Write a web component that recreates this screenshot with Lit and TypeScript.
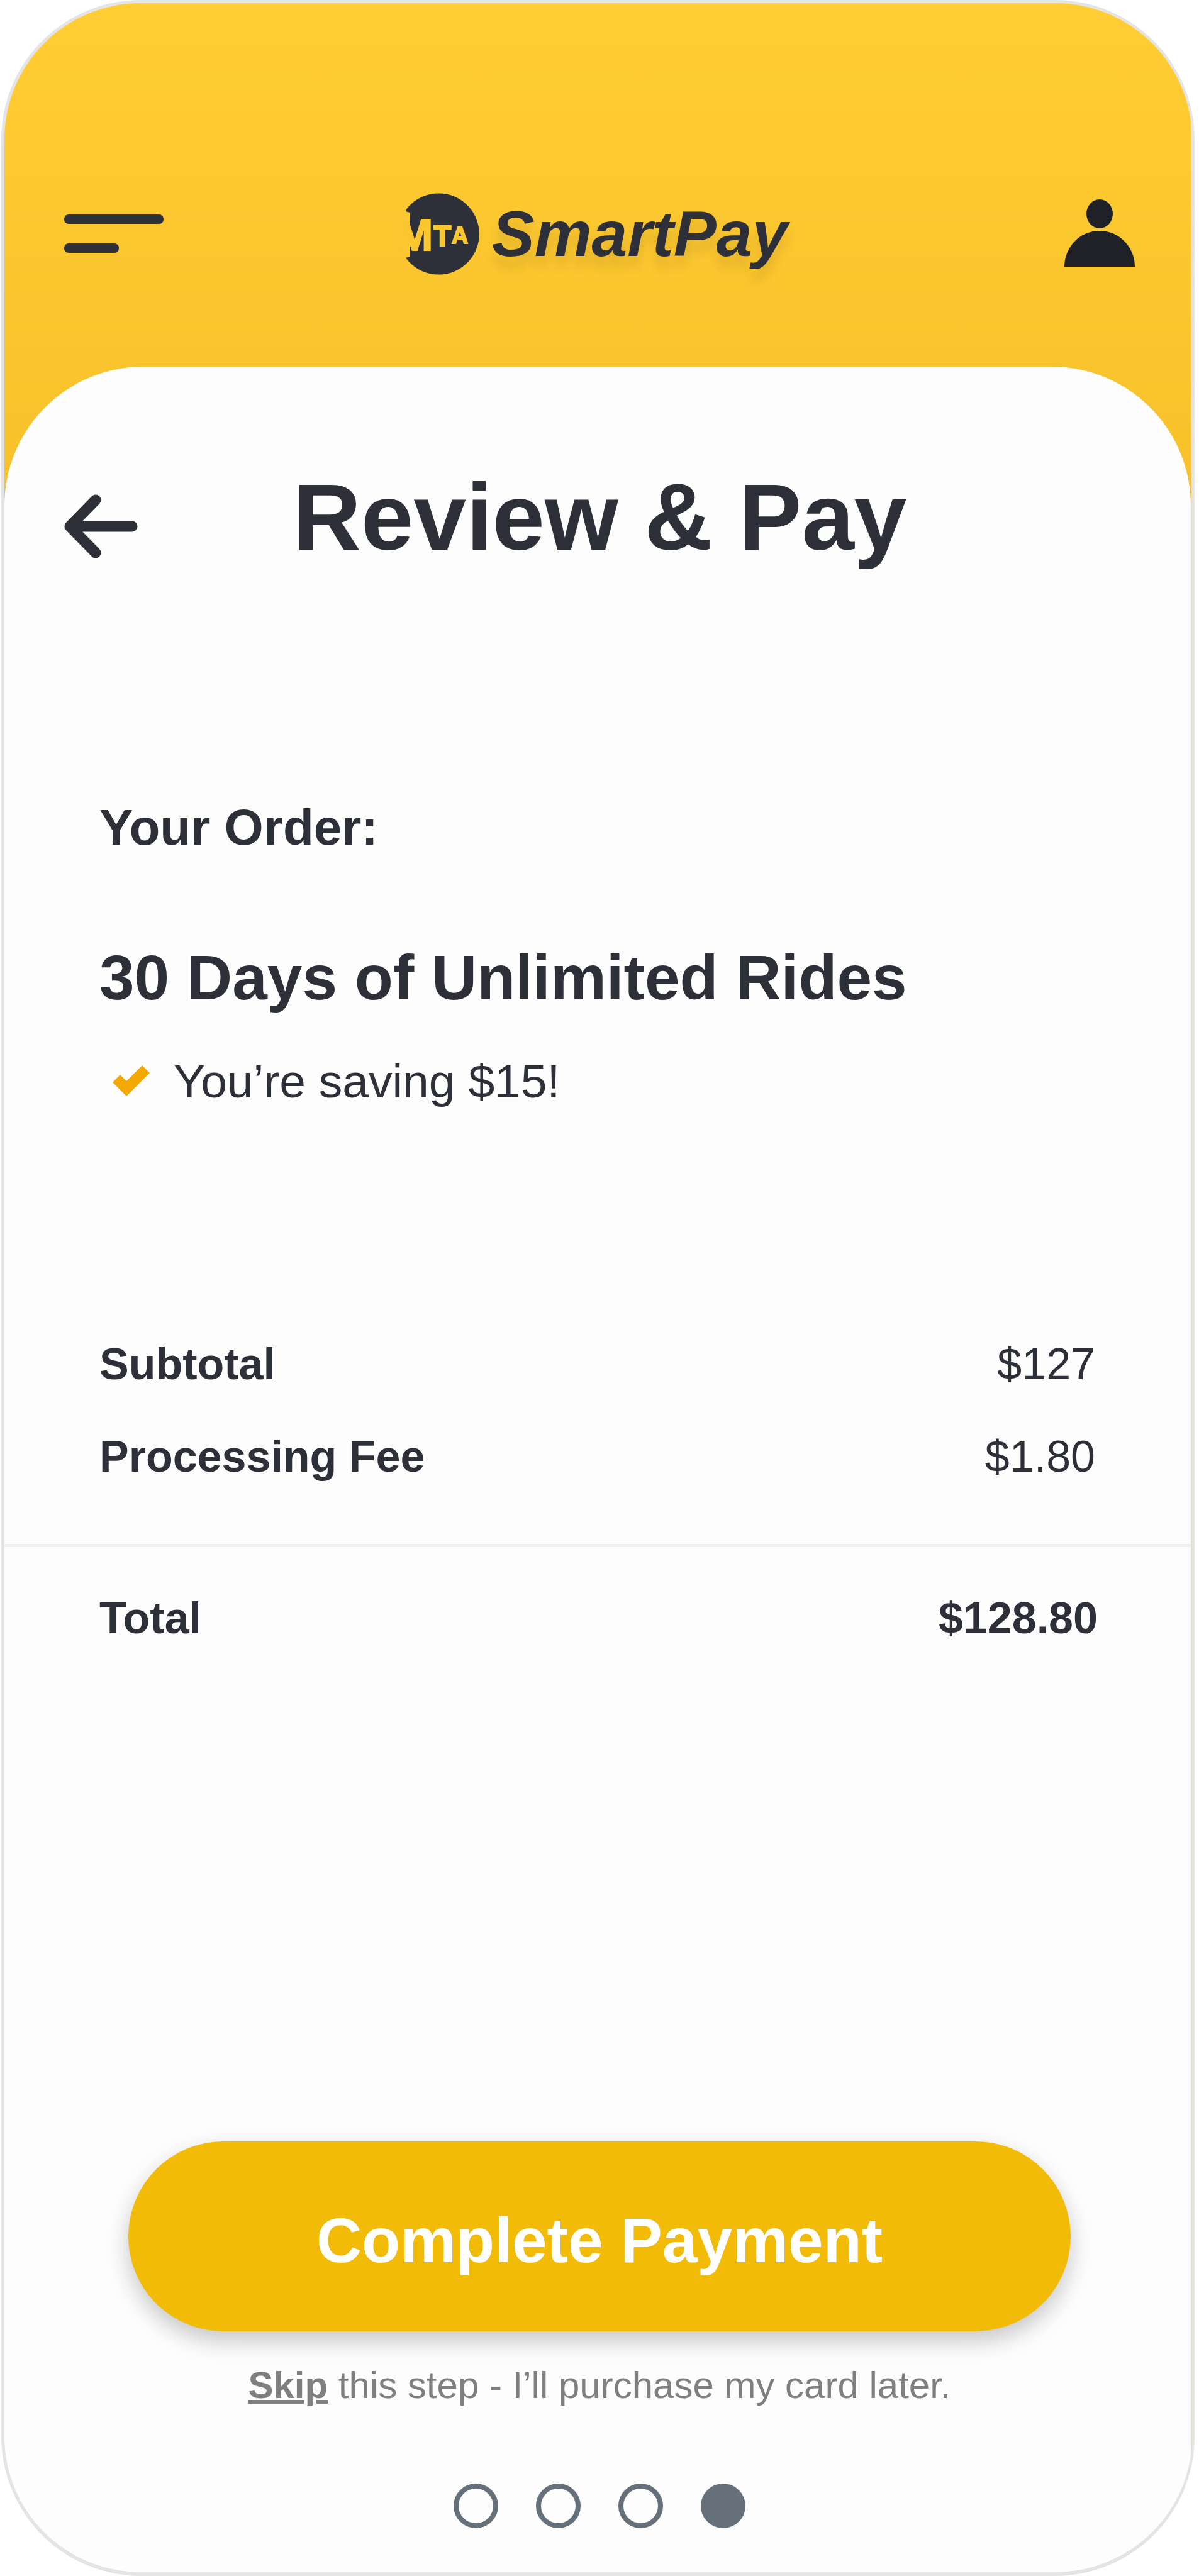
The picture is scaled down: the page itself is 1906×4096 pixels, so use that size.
import { LitElement, html, css } from "lit";
import { customElement, property, state } from "lit/decorators.js";
import { classMap } from "lit/directives/class-map.js";

interface Line {
  label: string;
  amount: string;
}

@customElement("app-header")
export class AppHeader extends LitElement {
  static styles = css`
    :host {
      display: grid;
      grid-template-columns: 1fr auto 1fr;
      align-items: center;
      padding: 302px 88px 146px 95px;
      color: #2e3039;
    }
    button {
      display: block;
      border: 0;
      padding: 0;
      background: none;
      color: inherit;
      cursor: pointer;
    }
    svg {
      display: block;
    }
    .profile {
      justify-self: end;
      color: #202126;
    }
    .brand {
      display: flex;
      align-items: center;
      gap: 20px;
      padding-right: 10px;
      color: inherit;
      text-decoration: none;
    }
    .mark {
      font-weight: 700;
      overflow: visible;
    }
    .letters {
      fill: #fbc730;
      stroke: #fbc730;
      stroke-width: 2px;
    }
    .letter-m { font-size: 70px; }
    .letter-t { font-size: 46px; }
    .letter-a { font-size: 36px; }
    .name {
      font-size: 102px;
      line-height: 120px;
      font-weight: 700;
      font-style: italic;
      text-shadow: 0 18px 18px rgba(0, 0, 0, 0.1);
    }
  `;

  render() {
    return html`
      <button class="menu" aria-label="Menu">
        <svg width="158" height="62" viewBox="0 0 158 62" fill="currentColor">
          <rect width="158" height="15" rx="7" />
          <rect y="46" width="87" height="15" rx="7" />
        </svg>
      </button>
      <a class="brand" href="#">
        <svg class="mark" width="117" height="130" viewBox="0 0 117 130">
          <path fill="currentColor" d="M0 27A64.6 64.6 0 1 1 0 103L6 101V31L0 29Z" />
          <g class="letters">
            <text class="letter-m" x="-15" y="91">M</text>
            <text class="letter-t" x="44" y="84">T</text>
            <text class="letter-a" x="73" y="80">A</text>
          </g>
        </svg>
        <span class="name">SmartPay</span>
      </a>
      <button class="profile" aria-label="Account">
        <svg width="114" height="110" viewBox="0 0 114 110" fill="currentColor">
          <ellipse cx="57" cy="23" rx="21" ry="23" />
          <path d="M1 107A56 57 0 0 1 113 107Z" />
        </svg>
      </button>
    `;
  }
}

@customElement("order-table")
export class OrderTable extends LitElement {
  @property({ attribute: false }) lines: Line[] = [];
  @property() total = "";

  static styles = css`
    :host {
      display: block;
    }
    table {
      width: 100%;
      border-collapse: collapse;
      font-size: 70px;
      line-height: 84px;
    }
    th {
      padding: 31px 0 32px 151px;
      text-align: left;
      font-weight: 700;
    }
    td {
      padding: 31px 152px 32px 0;
      text-align: right;
    }
    tbody tr:last-child > * {
      padding-bottom: 97px;
    }
    tfoot {
      border-top: 5px solid #f0f0f0;
    }
    tfoot th,
    tfoot td {
      padding-top: 71px;
      font-weight: 700;
    }
    tfoot td {
      padding-right: 148px;
    }
  `;

  render() {
    return html`
      <table>
        <tbody>
          ${this.lines.map(
            (l) => html`<tr><th scope="row">${l.label}</th><td>${l.amount}</td></tr>`
          )}
        </tbody>
        <tfoot>
          <tr><th scope="row">Total</th><td>${this.total}</td></tr>
        </tfoot>
      </table>
    `;
  }
}

@customElement("step-dots")
export class StepDots extends LitElement {
  @property({ type: Number }) count = 4;
  @property({ type: Number }) current = 0;

  static styles = css`
    ol {
      display: flex;
      justify-content: center;
      gap: 60px;
      margin: 0;
      padding: 0;
      list-style: none;
    }
    .dot {
      box-sizing: border-box;
      width: 71px;
      height: 71px;
      border: 8px solid #66707a;
      border-radius: 50%;
    }
    .on {
      background: #66707a;
    }
  `;

  render() {
    return html`
      <ol>
        ${Array.from(
          { length: this.count },
          (_, i) => html`<li class=${classMap({ dot: true, on: i === this.current })}></li>`
        )}
      </ol>
    `;
  }
}

@customElement("app-root")
export class AppRoot extends LitElement {
  @state() private lines: Line[] = [
    { label: "Subtotal", amount: "$127" },
    { label: "Processing Fee", amount: "$1.80" },
  ];

  static styles = css`
    :host {
      display: block;
      background: #fff;
      font-family: "Liberation Sans", Arial, sans-serif;
      color: #2e3039;
    }
    .frame {
      box-sizing: border-box;
      display: flex;
      min-height: 100vh;
      margin: 0 7px 0 2px;
      padding-right: 2px;
      border: 5px solid #e4e4e4;
      border-right-width: 4px;
      border-bottom-width: 6px;
      border-radius: 222px;
      background: #e6dfcb;
      overflow: hidden;
    }
    .screen {
      flex: 1;
      display: flex;
      flex-direction: column;
      background: linear-gradient(#ffcd34, #f7c02a) no-repeat top / 100% 830px;
    }
    .sheet {
      flex: 1;
      display: flex;
      flex-direction: column;
      border-radius: 221px 221px 0 0;
      background: #fdfdfd;
    }
    .heading {
      display: grid;
      grid-template-columns: 1fr auto 1fr;
      align-items: end;
      padding: 173px 88px 0 95px;
    }
    .back {
      justify-self: start;
      border: 0;
      padding: 0;
      background: none;
      color: inherit;
      cursor: pointer;
    }
    svg {
      display: block;
    }
    h1,
    h2,
    h3,
    p {
      margin: 0;
    }
    h1 {
      font-size: 150px;
      line-height: 132px;
    }
    .order {
      display: flex;
      flex-direction: column;
      padding: 380px 148px 332px 151px;
    }
    h2 {
      margin-bottom: 130px;
      font-size: 80px;
      line-height: 96px;
    }
    h3 {
      margin-bottom: 60px;
      font-size: 100px;
      line-height: 120px;
    }
    .saving {
      display: flex;
      align-items: center;
      gap: 37px;
      padding-left: 21px;
      font-size: 75px;
      line-height: 90px;
    }
    .actions {
      display: flex;
      flex-direction: column;
      margin-top: auto;
      padding: 80px 191px 70px 197px;
    }
    .pay {
      border: 0;
      border-radius: 151px;
      padding: 97px 0 85px;
      background: #f2bb07;
      box-shadow: 0 15px 36px rgba(0, 0, 0, 0.22);
      color: #fff;
      font: 700 100px/120px "Liberation Sans", Arial, sans-serif;
      cursor: pointer;
    }
    .skip {
      margin: 50px 0 120px;
      text-align: center;
      font-size: 60px;
      line-height: 72px;
      color: #7f7f7f;
    }
    .skip a {
      color: inherit;
      font-weight: 700;
    }
  `;

  render() {
    return html`
      <div class="frame">
        <div class="screen">
          <app-header></app-header>
          <main class="sheet">
            <div class="heading">
              <button class="back" aria-label="Back">
                <svg width="118" height="102" viewBox="0 0 118 102" fill="none" stroke="currentColor"
                  stroke-width="17" stroke-linecap="round" stroke-linejoin="round">
                  <path d="M50 9L9 51L50 93M9 51H108" />
                </svg>
              </button>
              <h1>Review &amp; Pay</h1>
            </div>
            <section class="order">
              <h2>Your Order:</h2>
              <h3>30 Days of Unlimited Rides</h3>
              <p class="saving">
                <svg width="60" height="50" viewBox="0 0 60 50" fill="#f4a900">
                  <path d="M0 27L12 15L22 25L47 0L59 12L22 49Z" />
                </svg>
                <span>You’re saving $15!</span>
              </p>
            </section>
            <order-table .lines=${this.lines} total="$128.80"></order-table>
            <div class="actions">
              <button class="pay">Complete Payment</button>
              <p class="skip"><a href="#">Skip</a> this step - I’ll purchase my card later.</p>
              <step-dots count="4" current="3"></step-dots>
            </div>
          </main>
        </div>
      </div>
    `;
  }
}
